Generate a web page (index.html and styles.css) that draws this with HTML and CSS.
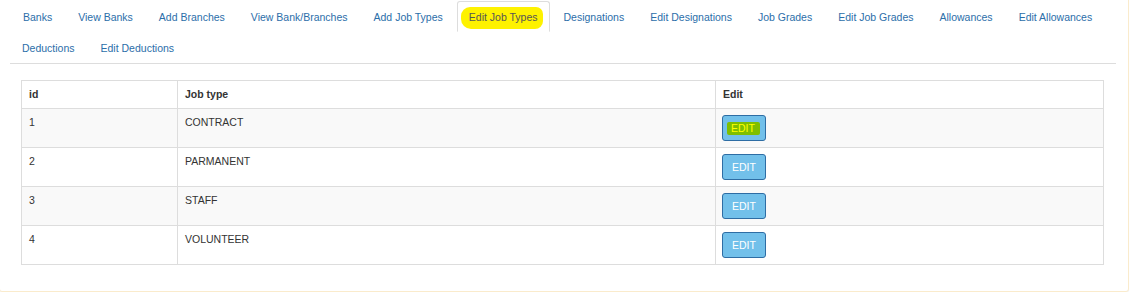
FILE: index.html
```html
<!DOCTYPE html>
<html>
<head>
<meta charset="utf-8">
<link rel="stylesheet" href="styles.css">
</head>
<body>
<div class="panel">
  <ul class="tabs">
    <li><a href="#">Banks</a></li>
    <li><a href="#">View Banks</a></li>
    <li><a href="#">Add Branches</a></li>
    <li><a href="#">View Bank/Branches</a></li>
    <li><a href="#">Add Job Types</a></li>
    <li class="active"><a href="#"><span class="mark">Edit Job Types</span></a></li>
    <li><a href="#">Designations</a></li>
    <li><a href="#">Edit Designations</a></li>
    <li><a href="#">Job Grades</a></li>
    <li><a href="#">Edit Job Grades</a></li>
    <li><a href="#">Allowances</a></li>
    <li><a href="#">Edit Allowances</a></li>
    <li><a href="#">Deductions</a></li>
    <li><a href="#">Edit Deductions</a></li>
  </ul>
  <div class="tab-content">
    <table class="grid">
      <colgroup>
        <col class="c-id">
        <col class="c-type">
        <col class="c-edit">
      </colgroup>
      <thead>
        <tr><th>id</th><th>Job type</th><th>Edit</th></tr>
      </thead>
      <tbody>
        <tr><td>1</td><td>CONTRACT</td><td class="cell-btn"><button class="btn"><span class="mark-green">EDIT</span></button></td></tr>
        <tr><td>2</td><td>PARMANENT</td><td class="cell-btn"><button class="btn">EDIT</button></td></tr>
        <tr><td>3</td><td>STAFF</td><td class="cell-btn"><button class="btn">EDIT</button></td></tr>
        <tr><td>4</td><td>VOLUNTEER</td><td class="cell-btn"><button class="btn">EDIT</button></td></tr>
      </tbody>
    </table>
  </div>
</div>
</body>
</html>
```

FILE: styles.css
```css
html, body {
  margin: 0;
  padding: 0;
  background: #fff;
}
body {
  font-family: "Liberation Sans", Arial, sans-serif;
  font-size: 10.5px;
  line-height: 15px;
  color: #333;
}
.panel {
  margin: -11px 13px 0 -1px;
  padding: 11px 12px 11px 10px;
  border: 1px solid #faebcc;
  border-radius: 3px;
  box-shadow: 0 1px 1px rgba(0, 0, 0, 0.05);
  background: #fff;
}
.tabs {
  display: flex;
  flex-wrap: wrap;
  list-style: none;
  margin: 0;
  padding: 0;
  border-bottom: 1px solid #ddd;
}
.tabs li {
  margin-right: 2px;
}
.tabs a {
  display: block;
  padding: 8px 11px 6px;
  line-height: 15px;
  border: 1px solid transparent;
  border-radius: 3px 3px 0 0;
  color: #2b6ea9;
  text-decoration: none;
}
.tabs li:first-child a {
  padding-left: 12px;
}
.tabs .active a {
  color: #555;
  background: #fff;
  border-color: #ddd #ddd transparent;
}
.mark {
  display: inline-block;
  background: #fef200;
  padding: 3.5px 5px 3.5px 8px;
  margin: -3.5px -5px -3.5px -8px;
  border-radius: 9px 7px 8px 10px;
}
.tab-content {
  padding: 16px 12px 0 11px;
}
.grid {
  width: 100%;
  border-collapse: collapse;
  table-layout: fixed;
  margin-bottom: 15px;
  border: 1px solid #ddd;
}
.c-id { width: 156px; }
.c-type { width: 538px; }
.grid th, .grid td {
  border: 1px solid #ddd;
  padding: 6px 6px 6px 7px;
  line-height: 15px;
  text-align: left;
  vertical-align: top;
}
.grid .cell-btn {
  padding-left: 6px;
}
.grid th {
  font-weight: bold;
}
.grid tbody tr:nth-child(odd) {
  background: #f9f9f9;
}
.btn {
  display: block;
  width: 44px;
  height: 26px;
  padding: 0;
  margin: 0;
  font-family: "Liberation Sans", Arial, sans-serif;
  font-size: 10.5px;
  line-height: 15px;
  color: #fff;
  background: #72c0ea;
  border: 1px solid #2e6da4;
  border-radius: 3px;
  text-align: center;
}
.mark-green {
  display: inline-block;
  background: #7fbf00;
  color: #ffff00;
  padding: 0 5px 0 4px;
  margin: 0 -4px 0 -5px;
  line-height: 13px;
  border-radius: 2px;
}
```
